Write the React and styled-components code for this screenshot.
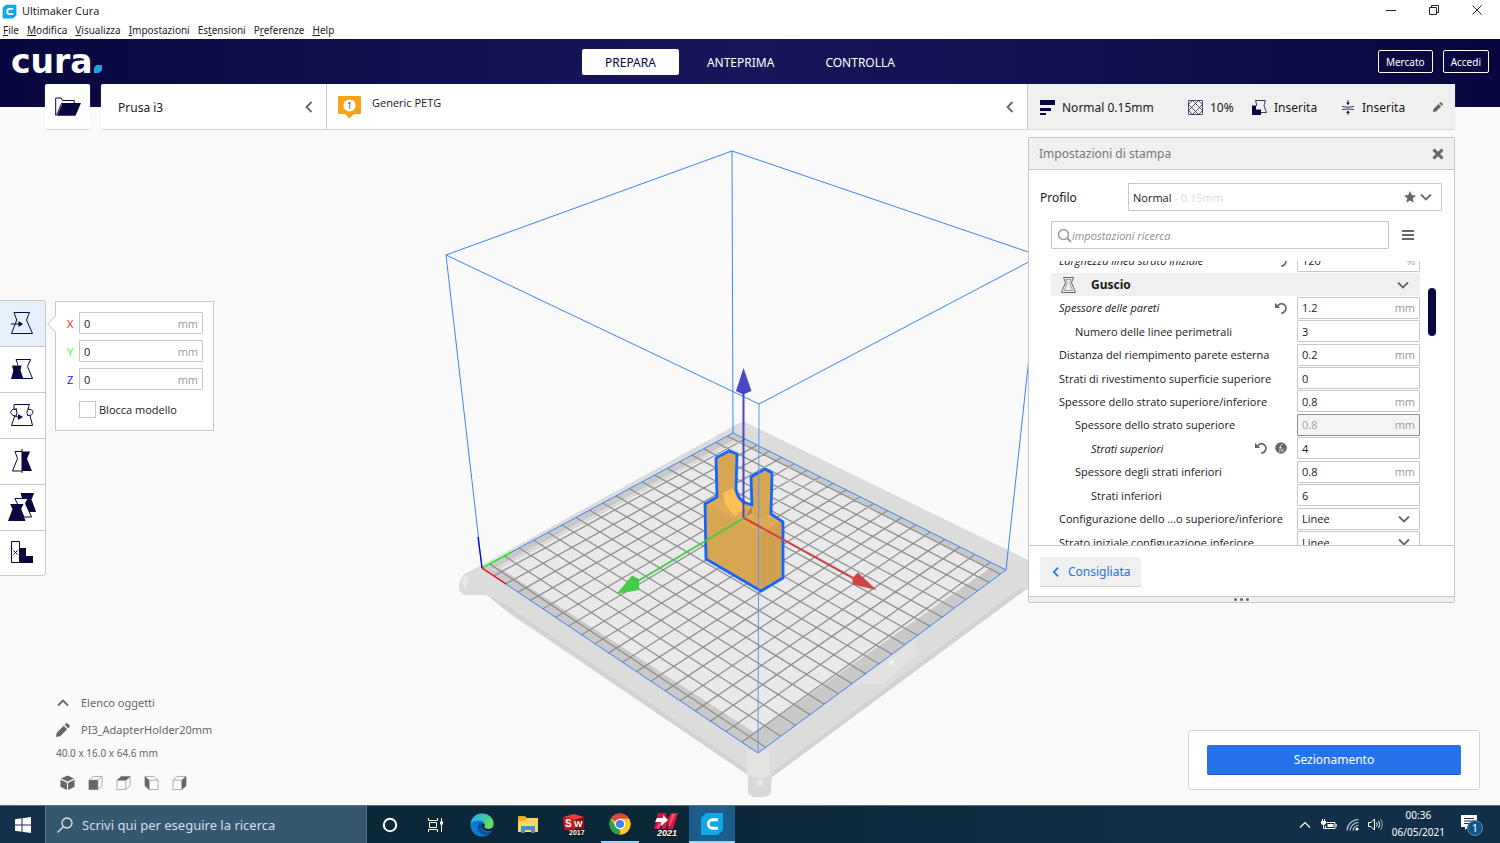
import React, { useState } from "react";
import styled, { createGlobalStyle } from "styled-components";

const navy = "#08073f";
const grey = "#666666";
const line = "#c7c7c7";
const blue = "#2672ea";

const small = `
  font-family: "Open Sans", "Noto Sans", sans-serif;
  font-size: 11px;
`;

const GlobalStyle = createGlobalStyle`
  * {
    box-sizing: border-box;
  }

  body {
    margin: 0;
    font-family: "Noto Sans", "Open Sans", sans-serif;
    font-size: 12px;
    color: #191919;
    background: #fafafa;
  }

  button,
  input,
  select {
    font: inherit;
    color: inherit;
    margin: 0;
    padding: 0;
    border: none;
    background: none;
    outline: none;
  }

  svg {
    display: block;
    flex-shrink: 0;
  }
`;

const Window = styled.div`
  min-height: 100vh;
  display: flex;
  flex-direction: column;
`;

/* window frame */

const TitleBar = styled.div`
  height: 22px;
  padding: 0 2px;
  display: flex;
  align-items: center;
  background: white;
`;

const WindowTitle = styled.span`
  flex: 1;
  padding: 0 0 2px 5px;
  ${small}
  color: #111;
`;

const WindowButton = styled.button`
  width: 43px;
  height: 22px;
  padding-bottom: 2px;
  display: flex;
  align-items: center;
  justify-content: center;
`;

const MenuBar = styled.nav`
  height: 17px;
  padding: 0 0 1px 3px;
  display: flex;
  align-items: center;
  gap: 8px;
  background: white;
  font-size: 10px;
`;

const MenuItem = styled.a`
  color: #222;
  text-decoration: none;
`;

const Header = styled.header`
  height: 45px;
  padding: 0 11px;
  display: grid;
  grid-template-columns: 1fr auto 1fr;
  align-items: center;
  background: linear-gradient(90deg, ${navy}, #18165a 50%, ${navy});
`;

const Brand = styled.div`
  display: flex;
  align-items: baseline;
  gap: 1px;
  font-family: "DejaVu Sans", sans-serif;
  font-weight: bold;
  font-size: 33px;
  line-height: 32px;
  color: white;
`;

const Stages = styled.div`
  display: flex;
  gap: 5px;
`;

const StageTab = styled.button`
  height: 26px;
  padding: 1px 23px 0;
  border-radius: 2px;
  font-size: 12px;
  color: ${(props) => (props.$active ? navy : "white")};
  background: ${(props) => (props.$active ? "white" : "transparent")};
`;

const Account = styled.div`
  display: flex;
  justify-content: flex-end;
  gap: 10px;
`;

const OutlineButton = styled.button`
  height: 23px;
  padding: 1px 7px 0;
  border: 1px solid white;
  border-radius: 2px;
  font-size: 10px;
  color: white;
`;

/* work area */

const Main = styled.main`
  position: relative;
  flex: 1;
  display: flex;
  flex-direction: column;
  background: linear-gradient(90deg, ${navy}, #18165a 50%, ${navy}) top / 100%
    23px no-repeat #fafafa;
`;

const Scene = styled.svg`
  position: absolute;
  top: 0;
  left: 0;
  width: 100%;
  height: 100%;
`;

const TopRow = styled.div`
  position: relative;
  height: 45px;
  margin: 0 45px;
  display: flex;
  gap: 11px;
`;

const Card = styled.div`
  flex: 1;
  display: flex;
  border-radius: 2px;
  background: white;
  box-shadow: 0 1px 1px #d4d4d4;
`;

const OpenButton = styled.button`
  width: 45px;
  display: flex;
  align-items: center;
  justify-content: center;
  border-radius: 2px;
  background: white;
  box-shadow: 0 1px 1px #d4d4d4;
`;

const PrinterButton = styled.button`
  width: 226px;
  padding: 1px 10px 0 17px;
  display: flex;
  align-items: center;
  justify-content: space-between;
  border-right: 1px solid ${line};
`;

const MaterialButton = styled.button`
  flex: 1;
  padding: 1px 10px 0 11px;
  display: flex;
  align-items: center;
  text-align: left;
  gap: 11px;
  border-right: 1px solid ${line};
`;

const MaterialName = styled.span`
  flex: 1;
  padding-bottom: 10px;
  ${small}
`;

const SummaryButton = styled.button`
  width: 427px;
  padding: 1px 12px 0;
  display: grid;
  grid-template-columns: 148px 64px 89px 1fr auto;
  align-items: center;
  background: #f0f0f0;
`;

const SummaryItem = styled.span`
  display: flex;
  align-items: center;
  gap: 7px;
`;

const Body = styled.div`
  position: relative;
  flex: 1;
  padding-top: 8px;
  display: flex;
  justify-content: space-between;
`;

const Side = styled.div`
  display: flex;
  flex-direction: column;
  justify-content: space-between;
  align-items: ${(props) => (props.$right ? "flex-end" : "flex-start")};
`;

const ToolArea = styled.div`
  padding-top: 163px;
  display: flex;
  align-items: flex-start;
  gap: 9px;
`;

const Toolbar = styled.div`
  width: 46px;
  border: 1px solid ${line};
  border-left: none;
  border-radius: 0 4px 4px 0;
  overflow: hidden;
  background: white;
`;

const ToolButton = styled.button`
  width: 100%;
  height: 46px;
  padding-bottom: 2px;
  padding-right: 1px;
  display: flex;
  align-items: center;
  justify-content: center;
  border-bottom: 1px solid ${line};
  background: ${(props) => (props.$active ? "#e5f0fb" : "white")};

  &:last-child {
    height: 44px;
    border-bottom: none;
  }
`;

const MovePanel = styled.div`
  position: relative;
  width: 159px;
  margin-top: 1px;
  padding: 10px 10px 12px 11px;
  border: 1px solid ${line};
  background: white;
  ${small}
`;

const Pointer = styled.svg`
  position: absolute;
  top: 13px;
  left: -9px;
`;

const AxisRow = styled.label`
  height: 22px;
  margin-bottom: 6px;
  display: flex;
  align-items: center;
`;

const AxisName = styled.span`
  width: 12px;
  color: ${(props) => props.$color};
`;

const Field = styled.span`
  flex: 1;
  min-width: 0;
  height: 22px;
  padding: 0 4px;
  display: flex;
  align-items: center;
  border: 1px solid ${line};
  border-radius: 1px;
  background: white;
`;

const FieldInput = styled.input`
  flex: 1;
  min-width: 0;
  width: 0;
`;

const Unit = styled.span`
  color: #9a9a9a;
`;

const LockRow = styled.label`
  margin: 11px 0 0 12px;
  display: flex;
  align-items: center;
  gap: 3px;
`;

const LockBox = styled.input`
  appearance: none;
  width: 17px;
  height: 17px;
  border: 1px solid ${line};
  background: white;
`;

const ObjectInfo = styled.div`
  padding: 0 0 14px 56px;
  display: flex;
  flex-direction: column;
  gap: 11px;
  font-size: 11px;
  line-height: 16px;
  color: ${grey};
`;

const ObjectRow = styled.button`
  display: flex;
  align-items: center;
  gap: 11px;
`;

const ObjectSize = styled.span`
  margin-top: -4px;
  font-size: 10px;
`;

const ViewRow = styled.div`
  padding: 3px 0 0 4px;
  display: flex;
  gap: 13px;
`;

/* print settings */

const Panel = styled.section`
  width: 427px;
  margin-right: 45px;
  border: 1px solid ${line};
  border-radius: 2px;
  background: white;
`;

const PanelHeader = styled.div`
  height: 32px;
  padding: 0 10px;
  display: flex;
  align-items: center;
  justify-content: space-between;
  border-bottom: 1px solid ${line};
  background: #f0f0f0;
  color: #777;
`;

const ProfileRow = styled.label`
  padding: 13px 12px 0 11px;
  display: flex;
  align-items: center;
`;

const ProfileName = styled.span`
  width: 88px;
`;

const ProfileBox = styled.span`
  flex: 1;
  height: 28px;
  padding: 0 8px 0 4px;
  display: flex;
  align-items: center;
  gap: 3px;
  border: 1px solid ${line};
  border-radius: 1px;
  ${small}
`;

const ProfileSelect = styled.select`
  appearance: none;
  field-sizing: content;
`;

const ProfileDetail = styled.span`
  flex: 1;
  color: #dcdcdc;
`;

const SearchRow = styled.div`
  padding: 10px 40px 0 22px;
  display: flex;
  align-items: center;
  gap: 13px;
`;

const SearchBox = styled.label`
  flex: 1;
  height: 28px;
  padding: 0 5px;
  display: flex;
  align-items: center;
  border: 1px solid ${line};
  border-radius: 1px;
`;

const SearchInput = styled.input`
  flex: 1;
  ${small}

  &::placeholder {
    color: #8f8f8f;
    font-style: italic;
    opacity: 1;
  }
`;

const ListArea = styled.div`
  height: 284px;
  margin-top: 12px;
  padding: 0 18px 0 22px;
  display: flex;
  gap: 8px;
  overflow: hidden;
`;

const SettingList = styled.div`
  flex: 1;
  height: 305px;
  margin-top: -12px;
  display: grid;
  grid-auto-rows: 1fr;
  ${small}
`;

const ScrollThumb = styled.div`
  width: 8px;
  height: 48px;
  margin-top: 27px;
  border-radius: 4px;
  background: ${navy};
`;

const Category = styled.button`
  margin-top: 1px;
  padding: 0 10px 0 9px;
  display: flex;
  align-items: center;
  gap: 14px;
  background: #f0f0f0;
  font-family: "Noto Sans", sans-serif;
  font-size: 12px;
  font-weight: bold;
`;

const CategoryName = styled.span`
  flex: 1;
  text-align: left;
`;

const SettingRow = styled.div`
  padding-left: ${(props) => 8 + props.$level * 16}px;
  display: flex;
  align-items: center;
`;

const SettingLabel = styled.label`
  flex: 1;
  white-space: nowrap;
  font-style: ${(props) => (props.$changed ? "italic" : "normal")};
`;

const SettingIcons = styled.span`
  padding-right: 10px;
  display: flex;
  gap: 8px;
`;

const SettingField = styled(Field)`
  flex: 0 0 123px;
  padding-right: ${(props) => (props.$dropdown ? "8px" : "4px")};
  border: 1px solid ${(props) => (props.$off ? "#8f8f8f" : line)};
  background: ${(props) => (props.$off ? "#f4f4f4" : "white")};
  color: ${(props) => (props.$off ? "#a0a0a0" : "inherit")};
`;

const SettingSelect = styled.select`
  flex: 1;
  appearance: none;
`;

const PanelFooter = styled.div`
  padding: 11px 11px 10px;
  border-top: 1px solid ${line};
`;

const RecommendedButton = styled.button`
  height: 29px;
  padding: 0 11px 0 10px;
  display: flex;
  align-items: center;
  gap: 6px;
  border-radius: 2px;
  background: #f0f0f0;
  box-shadow: 0 1px 0 #d0d0d0;
  color: ${blue};
`;

const DragHandle = styled.div`
  height: 6px;
  display: flex;
  align-items: center;
  justify-content: center;
  gap: 3px;
  border-top: 1px solid ${line};
  background: #f0f0f0;
`;

const Dot = styled.span`
  width: 3px;
  height: 3px;
  border-radius: 50%;
  background: ${grey};
`;

const ActionPanel = styled.div`
  width: 292px;
  margin: 0 20px 15px 0;
  padding: 14px 18px;
  border: 1px solid #d4d4d4;
  border-radius: 3px;
  background: white;
`;

const SliceButton = styled.button`
  width: 100%;
  height: 30px;
  border-bottom: 1px solid #1d5fd0;
  border-radius: 2px;
  background: ${blue};
  color: white;
`;

/* taskbar */

const Taskbar = styled.footer`
  height: 38px;
  display: flex;
  border-top: 1px solid #5b7180;
  background: linear-gradient(90deg, #14304b, #0b2838 26%, #0c2838 50%, #122f49 80%);
  color: white;
`;

const TaskButton = styled.button`
  width: ${(props) => props.$width || 46}px;
  display: flex;
  align-items: center;
  justify-content: center;
  background: ${(props) => (props.$active ? "#1b5e8c" : "transparent")};
  border-bottom: ${(props) => (props.$active ? "2px solid #9fd3f5" : "none")};
`;

const RunningButton = styled(TaskButton)`
  width: 38px;
  margin: 0 4px;
  border-bottom: 2px solid #9fd3f5;
`;

const TaskSearch = styled.label`
  width: 322px;
  padding: 0 11px;
  display: flex;
  align-items: center;
  gap: 9px;
  border: 1px solid #567689;
  border-width: 0 1px;
  background: #34596f;
`;

const TaskInput = styled.input`
  flex: 1;
  font-size: 13px;

  &::placeholder {
    color: #d5dee3;
    opacity: 1;
  }
`;

const Tray = styled.div`
  flex: 1;
  padding-right: 16px;
  display: flex;
  align-items: center;
  justify-content: flex-end;
  gap: 9px;
`;

const Clock = styled.div`
  margin-right: 6px;
  text-align: center;
  font-size: 10px;
  line-height: 17px;
  padding-bottom: 2px;
`;

const Chevron = ({ d, size = 14, color = grey, width = 1.8 }) => (
  <svg width={size} height={size} viewBox="0 0 14 14" fill="none" stroke={color} strokeWidth={width}>
    <path d={d} />
  </svg>
);

const LEFT = "M9.5 2 4.5 7l5 5";
const DOWN = "M2 4.5 7 9.5l5-5";
const UP = "M2 9.5 7 4.5l5 5";

const Pencil = ({ size = 12 }) => (
  <svg width={size} height={size} viewBox="0 0 12 12" fill={grey}>
    <path d="M0 12 .6 8.400 6.600 2.400l3 3L3.600 11.400zM7.400 1.600 8.500.5q.7-.7 1.500 0l1.500 1.500q.7.8 0 1.500l-1.100 1.100z" />
  </svg>
);

const Reset = () => (
  <svg width="12" height="12" viewBox="0 0 12 12" fill="none" stroke={grey} strokeWidth="1.700">
    <path d="M2.500 4.200C4.500 1.500 7 1.300 8.800 2.400 11 3.800 11.500 6.500 10.200 8.700 9.300 10.200 8 11 6.300 11.200" />
    <path d="M0 .8V6h5.200z" fill={grey} stroke="none" />
  </svg>
);

const Formula = () => (
  <svg width="12" height="12" viewBox="0 0 12 12">
    <circle cx="6" cy="6" r="5.800" fill={grey} />
    <path
      d="M3.200 10.400c1.500 0 1.500-1.200 1.800-3.400.4-2.900.8-4.800 2.600-4.800M3.800 5.400h3M6 6.600l2.800 3.400M8.800 6.600 6 10"
      fill="none"
      stroke="#e4e4e4"
      strokeWidth=".8"
    />
  </svg>
);

const CuraMark = ({ size }) => (
  <svg width={size} height={size} viewBox="0 0 24 24">
    <path d="M6 1h17v17l-5 5H1V6z" fill="#0fa9e6" />
    <path d="M18 7.800H12.500a4.200 4.200 0 0 0 0 8.400H18" fill="none" stroke="white" strokeWidth="3" />
  </svg>
);

const HOURGLASS = "M4 1.500h15.500l-3 7.500 6 13.500h-21L6.700 9z";

const tools = [
  {
    name: "Sposta",
    art: (
      <>
        <path d={HOURGLASS} />
        <path d="M1 13h9" />
        <path d="M8.500 10v6l4.500-3z" fill={navy} stroke="none" />
      </>
    ),
  },
  {
    name: "Scala",
    art: (
      <>
        <path d="M7.500 8V6.500L6 2.500h14.500l-3 7 5 12H13" />
        <path d="M2 8.500h9.500l-1 5 3 8.500H1l2.300-8.500z" fill={navy} stroke="none" />
      </>
    ),
  },
  {
    name: "Ruota",
    art: (
      <>
        <path d="M4 6V1.500h15.500l-1.500 4M20 12.500l2.500 10h-21L5 12" />
        <path d="M6 6.500C3 5.500.8 7 .8 9.300S4 13.500 9 14.200M18.300 6.500c2.500-.8 4.700.8 4.700 2.800s-2 3.200-5 3.200M6 5l1 5-1 3M18.500 5l-1.700 4.500L18 13" />
        <path d="M8 11v6l5-3z" fill={navy} stroke="none" />
      </>
    ),
  },
  {
    name: "Specchia",
    art: (
      <>
        <path d="M12 2.500H5l2.500 7-5 12.500H12M12 0v24" />
        <path d="M12 2.500h8l-3 7.500L22 22H12z" fill={navy} stroke="none" />
      </>
    ),
  },
  {
    name: "Impostazioni per modello",
    size: 28,
    art: (
      <>
        <path d="M13 .5h12.500L23 6.500 27.500 18.500H20L15.500 8z" fill={navy} stroke={navy} />
        <path d="M7 5.500h13L17.500 10.500l6 13.500H16L9 10z" fill="white" />
        <path d="M2 11h13.500l-2.300 5L17.500 28H0l4.500-12z" fill={navy} stroke="none" />
      </>
    ),
  },
  {
    name: "Blocco supporto",
    art: (
      <>
        <path d="M1.500 1.500h8v21h-8zM3.500 10.500l4 4M7.500 10.500l-4 4" />
        <path d="M9.500 8h6.500v8h7v7H9.500z" fill={navy} stroke="none" />
      </>
    ),
  },
];

const settings = [
  { name: "Larghezza linea strato iniziale", value: "120", unit: "%", changed: true },
  { category: "Guscio" },
  { name: "Spessore delle pareti", value: "1.2", unit: "mm", changed: true },
  { name: "Numero delle linee perimetrali", value: "3", level: 1 },
  { name: "Distanza del riempimento parete esterna", value: "0.2", unit: "mm" },
  { name: "Strati di rivestimento superficie superiore", value: "0" },
  { name: "Spessore dello strato superiore/inferiore", value: "0.8", unit: "mm" },
  { name: "Spessore dello strato superiore", value: "0.8", unit: "mm", level: 1, off: true },
  { name: "Strati superiori", value: "4", level: 2, changed: true, formula: true },
  { name: "Spessore degli strati inferiori", value: "0.8", unit: "mm", level: 1 },
  { name: "Strati inferiori", value: "6", level: 2 },
  { name: "Configurazione dello ...o superiore/inferiore", options: ["Linee", "Concentrica"] },
  { name: "Strato iniziale configurazione inferiore", options: ["Linee", "Concentrica"] },
];

const Setting = ({ item, id }) => (
  <SettingRow $level={item.level || 0}>
    <SettingLabel htmlFor={id} $changed={item.changed}>
      {item.name}
    </SettingLabel>
    {item.changed && (
      <SettingIcons>
        <Reset />
        {item.formula && <Formula />}
      </SettingIcons>
    )}
    <SettingField $off={item.off} $dropdown={Boolean(item.options)}>
      {item.options ? (
        <>
          <SettingSelect id={id}>
            {item.options.map((option) => (
              <option key={option}>{option}</option>
            ))}
          </SettingSelect>
          <Chevron d={DOWN} />
        </>
      ) : (
        <>
          <FieldInput id={id} defaultValue={item.value} disabled={item.off} />
          {item.unit && <Unit>{item.unit}</Unit>}
        </>
      )}
    </SettingField>
  </SettingRow>
);

// projects a point of the bed (0..1 on both sides) to the view
const project = (u, v) => {
  const w = 1 - 0.1512 * u + 0.1484 * v;
  const x = (161.4 * u + 359.8 * v + 482) / w;
  const y = (71.1 * u - 70.7 * v + 568) / w;
  return `${x.toFixed(1)} ${y.toFixed(1)}`;
};

const gridPath = () => {
  let d = "";
  for (let i = 1; i < 20; i++) {
    d += `M${project(i / 20, 0)}L${project(i / 20, 1)}`;
  }
  for (let j = -9; j <= 9; j++) {
    const v = 0.5 + j / 19;
    d += `M${project(0, v)}L${project(1, v)}`;
  }
  return d;
};

const MODEL =
  "M716 458 729 451 737 454 736 489Q738 500 746 503L752 505 751 477 765 469 772 473 771 514 783 522V578L761 591 706 559 705 504 717 497z";

const BuildPlate = () => (
  <Scene viewBox="0 84 1500 721" fill="none" aria-hidden="true">
    <path d="M459 583 464 574 482 565 743 421 1028 560 1060 572V590H1025L772 777 770 795 765 797H753L748 793V775L507 612 487 595H463L459 590z" fill="#dcdcdc" />
    <path d="M487 595 507 610 748 775V770L508 606zM772 777 1025 590 1020 588 772 772z" fill="#d2d2d2" />
    <path d="M747 750H770V775L760 779 747 774z" fill="#e3e3e3" />
    <path d="M748 776 760 780 771 776V793L766 797H753L748 793z" fill="#d8d8d8" />
    <path d="M757 780h6v6h-6z" fill="#e6e6e6" />
    <path d="M852 684 916 640V654L883 684z" fill="#e2e2e2" />
    <path d="M889 659h5v6h-5z" fill="#f0f0f0" />
    <path d="M466 574c-5 5-5 9-1 15l4-7z" fill="#e8e8e8" />
    <path d="M482 568 733 433 1006 570 758 753z" fill="#c9c9c9" />
    <path d="M500 568 736 441 990 568 755 733z" fill="#e9e9e9" />
    <path d="M493 570 735 440" stroke="#efefef" />
    <path d={gridPath()} stroke="#8f9092" strokeWidth="1.300" />
    <g stroke="#3b84f5">
      <path d="M482 568 733 433 1006 570 758 753z" />
      <path d="M446 255 732 151 1040 256 759 404zM446 255 482 568M732 151 733 433M1040 256 1006 570" />
    </g>
    <path d="M482 568 512 552" stroke="#0f0" strokeWidth="1.300" />
    <path d="M482 568 506 584" stroke="red" strokeWidth="1.300" />
    <path d="M478 537 482 568" stroke="#0000e0" strokeWidth="1.300" />
    <path d={MODEL} fill="#d6a653" />
    <path d="M761 531 783 521V578L761 591z" fill="#d0a04f" />
    <path d="M705 504 717 497 748 514 771 514 783 521 761 532z" fill="#dfaa55" />
    <path d="M716 458 729 451 737 454 736 489 733 490 723 493 716 498zM754 478 765 469 772 473V514L754 520z" fill="#d6a653" />
    <path d="M723 493 733 488Q736 501 746 507L735 516Q724 507 723 493z" fill="#fcc258" />
    <path d="M745 517 752 506V513z" fill="#a98851" />
    <path d={MODEL} stroke="#1765ff" strokeWidth="2.800" strokeLinejoin="round" />
    <path d="M759 404 758 753" stroke="#5b96ee" />
    <path d="M743.500 518V390" stroke="#4b46c6" strokeWidth="2" />
    <path d="M743.500 368 751.500 391 743 394.500 736 391z" fill="#4b46c6" />
    <path d="M744 518 638 581" stroke="#44cc44" strokeWidth="2" />
    <path d="M616.500 594 632 575.500 639 579V590z" fill="#44cc44" />
    <path d="M744 518 853 578" stroke="#cc4444" strokeWidth="2" />
    <path d="M876.500 590 858 572.500 852.500 578V584.500z" fill="#cc4444" />
  </Scene>
);

const cubeFaces = [
  { name: "Vista 3D", path: "M8 0 15 3.300 8 6.500 1 3.300zM.5 4.500 7.400 7.600V15.500L.5 12zM8.600 7.600 15.500 4.500V12L8.600 15.500z", solid: true },
  { name: "Vista frontale", path: "M1 5h9.500v10H1z" },
  { name: "Vista superiore", path: "M1 5 5.500 1H15.500L10.500 5z" },
  { name: "Vista sinistra", path: "M15 1 10.500 5V15L15 11z", flip: true },
  { name: "Vista destra", path: "M15 1 10.500 5V15L15 11z" },
];

const CubeIcon = ({ face }) => (
  <svg width="15" height="16" viewBox="0 0 16 16">
    <g transform={face.flip ? "matrix(-1 0 0 1 16 0)" : undefined}>
      {!face.solid && (
        <path d="M1 5 5.500 1H15V11L10.500 15H1zM1 5h9.500v10M10.500 5 15 1" fill="none" stroke="#a8a8a8" />
      )}
      <path d={face.path} fill={grey} />
    </g>
  </svg>
);

const axes = [
  { name: "X", color: "#ff2222" },
  { name: "Y", color: "#33ff33" },
  { name: "Z", color: "#2222ff" },
];

const menus = [
  ["", "F", "ile"],
  ["", "M", "odifica"],
  ["", "V", "isualizza"],
  ["", "I", "mpostazioni"],
  ["Es", "t", "ensioni"],
  ["P", "r", "eferenze"],
  ["", "H", "elp"],
];

const App = () => {
  const [stage, setStage] = useState("PREPARA");
  const [tool, setTool] = useState("Sposta");

  return (
    <Window>
      <GlobalStyle />
      <TitleBar>
        <CuraMark size={15} />
        <WindowTitle>Ultimaker Cura</WindowTitle>
        <WindowButton aria-label="Riduci a icona">
          <svg width="10" height="10" stroke="#222">
            <path d="M0 5.500h10" />
          </svg>
        </WindowButton>
        <WindowButton aria-label="Ripristina">
          <svg width="10" height="10" fill="none" stroke="#222">
            <path d="M.5 2.500h7v7h-7zM2.500 2.500v-2h7v7h-2" />
          </svg>
        </WindowButton>
        <WindowButton aria-label="Chiudi">
          <svg width="10" height="10" stroke="#222">
            <path d="M.5.500l9 9M9.500.500l-9 9" />
          </svg>
        </WindowButton>
      </TitleBar>
      <MenuBar>
        {menus.map(([before, key, after]) => (
          <MenuItem href="#" key={before + key}>
            {before}
            <u>{key}</u>
            {after}
          </MenuItem>
        ))}
      </MenuBar>
      <Header>
        <Brand>
          cura
          <svg width="8" height="8">
            <path d="M2.500 0H8v5L5 8H0V2.500z" fill="#1fa3dc" />
          </svg>
        </Brand>
        <Stages>
          {["PREPARA", "ANTEPRIMA", "CONTROLLA"].map((name) => (
            <StageTab key={name} $active={stage === name} onClick={() => setStage(name)}>
              {name}
            </StageTab>
          ))}
        </Stages>
        <Account>
          <OutlineButton>Mercato</OutlineButton>
          <OutlineButton>Accedi</OutlineButton>
        </Account>
      </Header>

      <Main>
        <BuildPlate />
        <TopRow>
          <OpenButton aria-label="Apri file">
            <svg width="26" height="20" viewBox="0 0 26 20">
              <path d="M.7 18.500V1h5.500l1.500 2.500h11.500v3H6.500L1.500 18.500" fill="none" stroke={navy} />
              <path d="M7.500 6H26l-5.500 12.800H2.200z" fill={navy} />
            </svg>
          </OpenButton>
          <Card>
            <PrinterButton>
              Prusa i3
              <Chevron d={LEFT} />
            </PrinterButton>
            <MaterialButton>
              <svg width="23" height="23" viewBox="0 0 23 23">
                <path d="M1 0h21q1 0 1 1v16q0 1-1 1h-6l-4.500 4.500L7 18H1q-1 0-1-1V1q0-1 1-1z" fill="#f5a316" />
                <circle cx="11.500" cy="9.500" r="6" fill="white" />
                <text x="11.500" y="12.500" textAnchor="middle" fontSize="8" fill="#333">
                  1
                </text>
              </svg>
              <MaterialName>Generic PETG</MaterialName>
              <Chevron d={LEFT} />
            </MaterialButton>
            <SummaryButton>
              <SummaryItem>
                <svg width="15" height="15" fill={navy}>
                  <path d="M0 0h15v5H0zM0 8h11v3H0zM0 13h6v2H0z" />
                </svg>
                Normal 0.15mm
              </SummaryItem>
              <SummaryItem>
                <svg width="15" height="15" viewBox="0 0 15 15" fill="none" stroke={navy} strokeWidth=".7">
                  <path d="M.5.500h14v14H.5zM.5 4.500l4-4M.5 10.500l10-10M4.500 14.500l10-10M10.500 14.500l4-4M10.500.500l4 4M4.500.500l10 10M.5 4.500l10 10M.5 10.500l4 4" />
                </svg>
                10%
              </SummaryItem>
              <SummaryItem>
                <svg width="15" height="15" viewBox="0 0 15 15">
                  <path d="M0 5.500h4v4h5V15H0z" fill={navy} />
                  <path d="M4.500 6V4L3.500.500h10l-1.500 5 2.500 7H9" fill="none" stroke={navy} strokeWidth=".8" />
                </svg>
                Inserita
              </SummaryItem>
              <SummaryItem>
                <svg width="14" height="15" viewBox="0 0 14 15" fill="none" stroke={navy}>
                  <path d="M1 6.500q6 1.500 12 0M1 9.500q6-1 12 0" strokeWidth=".8" />
                  <path d="M7 0v3M7 12v3" strokeWidth=".8" />
                  <path d="M5.200 2.500h3.600L7 5.200zM5.200 13h3.600L7 10.300z" fill={navy} stroke="none" />
                </svg>
                Inserita
              </SummaryItem>
              <Pencil size={10} />
            </SummaryButton>
          </Card>
        </TopRow>

        <Body>
          <Side>
            <ToolArea>
              <Toolbar>
                {tools.map((item) => (
                  <ToolButton
                    key={item.name}
                    aria-label={item.name}
                    $active={tool === item.name}
                    onClick={() => setTool(item.name)}
                  >
                    <svg
                      width={item.size || 24}
                      height={item.size || 24}
                      viewBox={`0 0 ${item.size || 24} ${item.size || 24}`}
                      fill="none"
                      stroke={navy}
                    >
                      {item.art}
                    </svg>
                  </ToolButton>
                ))}
              </Toolbar>
              <MovePanel>
                <Pointer width="9" height="18">
                  <path d="M9 .5 .7 9 9 17.500" fill="white" stroke={line} />
                </Pointer>
                {axes.map((axis) => (
                  <AxisRow key={axis.name}>
                    <AxisName $color={axis.color}>{axis.name}</AxisName>
                    <Field>
                      <FieldInput defaultValue="0" />
                      <Unit>mm</Unit>
                    </Field>
                  </AxisRow>
                ))}
                <LockRow>
                  <LockBox type="checkbox" />
                  Blocca modello
                </LockRow>
              </MovePanel>
            </ToolArea>
            <ObjectInfo>
              <ObjectRow>
                <Chevron d={UP} />
                Elenco oggetti
              </ObjectRow>
              <ObjectRow>
                <Pencil size={14} />
                PI3_AdapterHolder20mm
              </ObjectRow>
              <ObjectSize>40.0 x 16.0 x 64.6 mm</ObjectSize>
              <ViewRow>
                {cubeFaces.map((face) => (
                  <button key={face.name} aria-label={face.name}>
                    <CubeIcon face={face} />
                  </button>
                ))}
              </ViewRow>
            </ObjectInfo>
          </Side>

          <Side $right>
            <Panel>
              <PanelHeader>
                Impostazioni di stampa
                <button aria-label="Chiudi impostazioni">
                  <svg width="12" height="12" stroke={grey} strokeWidth="3">
                    <path d="M1.500 1.500l9 9M10.500 1.500l-9 9" />
                  </svg>
                </button>
              </PanelHeader>
              <ProfileRow>
                <ProfileName>Profilo</ProfileName>
                <ProfileBox>
                  <ProfileSelect>
                    <option>Normal</option>
                  </ProfileSelect>
                  <ProfileDetail>- 0.15mm</ProfileDetail>
                  <svg width="12" height="12" viewBox="0 0 12 12" fill={grey}>
                    <path d="M6 0 7.700 4.100 12 4.500 8.700 7.400 9.700 11.800 6 9.400 2.300 11.800 3.300 7.400 0 4.500 4.300 4.100z" />
                  </svg>
                  <Chevron d={DOWN} />
                </ProfileBox>
              </ProfileRow>
              <SearchRow>
                <SearchBox>
                  <svg width="15" height="15" fill="none" stroke="#9a9a9a" strokeWidth="1.500">
                    <circle cx="6.500" cy="6.500" r="5" />
                    <path d="M10 10l4 4" strokeWidth="2" />
                  </svg>
                  <SearchInput placeholder="impostazioni ricerca" aria-label="impostazioni ricerca" />
                </SearchBox>
                <button aria-label="Visibilità impostazioni">
                  <svg width="12" height="12" fill={grey}>
                    <path d="M0 1h12v2H0zM0 5h12v2H0zM0 9h12v2H0z" />
                  </svg>
                </button>
              </SearchRow>
              <ListArea>
                <SettingList>
                  {settings.map((item, i) =>
                    item.category ? (
                      <Category key={item.category}>
                        <svg width="17" height="16" viewBox="0 0 17 16" fill="none" stroke={grey}>
                          <path d="M3.500.500h10l-2 5 4 10h-14l4-10z" />
                          <path d="M6 2.500h5l-1.200 3.500 2.700 7.500H4.500L7.200 6z" strokeWidth=".6" />
                        </svg>
                        <CategoryName>{item.category}</CategoryName>
                        <Chevron d={DOWN} />
                      </Category>
                    ) : (
                      <Setting key={item.name} item={item} id={`setting-${i}`} />
                    )
                  )}
                </SettingList>
                <ScrollThumb />
              </ListArea>
              <PanelFooter>
                <RecommendedButton>
                  <Chevron d={LEFT} size={12} color={blue} width={2} />
                  Consigliata
                </RecommendedButton>
              </PanelFooter>
              <DragHandle>
                <Dot />
                <Dot />
                <Dot />
              </DragHandle>
            </Panel>
            <ActionPanel>
              <SliceButton>Sezionamento</SliceButton>
            </ActionPanel>
          </Side>
        </Body>
      </Main>

      <Taskbar>
        <TaskButton $width={45} aria-label="Start">
          <svg width="16" height="16" fill="white">
            <path d="M0 2.200 6.500 1.300V7.500H0zM7.500 1.200 16 0V7.500H7.500zM0 8.500H6.500V14.700L0 13.800zM7.500 8.500H16V16L7.500 14.800z" />
          </svg>
        </TaskButton>
        <TaskSearch>
          <svg width="16" height="16" fill="none" stroke="#dfe7eb" strokeWidth="1.300">
            <circle cx="10" cy="6" r="5" />
            <path d="M6.500 9.500.5 15.500" />
          </svg>
          <TaskInput placeholder="Scrivi qui per eseguire la ricerca" aria-label="Ricerca" />
        </TaskSearch>
        <TaskButton aria-label="Cortana">
          <svg width="16" height="16" fill="none" stroke="white" strokeWidth="2">
            <circle cx="8" cy="8" r="6.200" />
          </svg>
        </TaskButton>
        <TaskButton aria-label="Visualizzazione attività">
          <svg width="16" height="16" fill="none" stroke="white">
            <path d="M.5 1v2.500h9V1M1.500 5.500h7v5h-7zM.5 15v-2.500h9V15M13.500 1v14" />
            <path d="M12 4.500h3v3h-3z" fill="white" stroke="none" />
          </svg>
        </TaskButton>
        <TaskButton aria-label="Edge">
          <svg width="24" height="24" viewBox="0 0 24 24">
            <defs>
              <linearGradient id="edgeTop" x1="0" y1="0" x2="1" y2=".4">
                <stop offset="0" stopColor="#2aa5e8" />
                <stop offset=".55" stopColor="#33c6c4" />
                <stop offset="1" stopColor="#6be04e" />
              </linearGradient>
            </defs>
            <circle cx="12" cy="12" r="11.500" fill="#1278d4" />
            <path d="M.6 11C1.500 4.500 6.500.5 12 .5c6.500 0 11.500 4.800 11.500 10 0 3.500-2.600 5.500-5.700 5.500-2.500 0-4-1-3.300-2.200C16 10.500 13 7.500 9.500 7.500 5 7.500 1.500 9 .6 11z" fill="url(#edgeTop)" />
            <path d="M9 10.500c-3 4 0 10.500 5.500 11.500 3.200.5 6.200-1.200 7.800-4-6 3-12-.5-11.300-5 .1-1.300.7-2 1.500-2.500-1-.8-2.500-.8-3.500 0z" fill="#0c4c9c" />
            <path d="M12.500 10.500c-1.800 1.700-1.500 4.500 1.500 6.500 3 1.700 6 1.300 8.700.2l1-2.700-3.200 1.200c-3 .6-7-.2-6-1.900.7-1.300.2-3-2-3.300z" fill="#0b2838" />
          </svg>
        </TaskButton>
        <TaskButton aria-label="Esplora file">
          <svg width="22" height="18" viewBox="0 0 22 18">
            <path d="M1 0h7l2 2H1z" fill="#e8a31c" />
            <path d="M1 2h20v14H1z" fill="#fcd462" />
            <path d="M1 2h9l-2 3H1z" fill="#eeb02a" />
            <path d="M4 17V11q0-1 1-1h12q1 0 1 1v6h-4v-3H8v3z" fill="#3d94d6" />
          </svg>
        </TaskButton>
        <TaskButton aria-label="SolidWorks">
          <svg width="24" height="24" viewBox="0 0 24 24" fontFamily="Liberation Sans" fontWeight="bold">
            <path d="M1 4 12 1 22 4 13 7z" fill="#ee3b3b" />
            <path d="M1 4 13 7V20L2 16z" fill="#c31a20" />
            <path d="M22 4 13 7V20L22 16z" fill="#8e1015" />
            <text x="3" y="14" fontSize="10" fill="white">S</text>
            <text x="12" y="14" fontSize="9" fill="white">W</text>
            <text x="7" y="22" fontSize="7" fill="white" stroke="#111" strokeWidth="1.500" paintOrder="stroke">2017</text>
          </svg>
        </TaskButton>
        <RunningButton aria-label="Chrome">
          <svg width="22" height="22" viewBox="0 0 22 22">
            <circle cx="11" cy="11" r="10.500" fill="#fbc928" />
            <path d="M11 11 1.900 5.700A10.500 10.500 0 0 1 20.100 5.700H11z" fill="#e04537" />
            <path d="M1.900 5.700 6.500 13.600 11 16 11 21.500A10.500 10.500 0 0 1 1.900 5.700z" fill="#2aa152" />
            <path d="M15.500 13.600 11 21.500A10.500 10.500 0 0 0 20.100 5.700H11z" fill="#fbc928" />
            <circle cx="11" cy="11" r="5.200" fill="white" />
            <circle cx="11" cy="11" r="4.100" fill="#4284f3" />
          </svg>
        </RunningButton>
        <TaskButton aria-label="Mastercam">
          <svg width="24" height="24" viewBox="0 0 24 24">
            <path d="M4 0h8l1 6 4-6h7l-5 16h-5l2-8-5 8h-3L8 8 6 16H0z" fill="#d8123c" />
            <path d="M3 5h6V2l5 5-7 6V9H1z" fill="white" />
            <path d="M2 15 5 15 8 10 5 10zM18 1 14 13 16 13 22 1z" fill="#f06c8c" opacity=".7" />
            <text x="3" y="23" fontFamily="Liberation Sans" fontSize="9" fontWeight="bold" fontStyle="italic" fill="white" stroke="#111" strokeWidth="1.500" paintOrder="stroke">
              2021
            </text>
          </svg>
        </TaskButton>
        <TaskButton $active aria-label="Ultimaker Cura">
          <CuraMark size={24} />
        </TaskButton>
        <Tray>
          <Chevron d={UP} size={14} color="white" width={1.200} />
          <svg width="16" height="12" viewBox="0 0 16 12" fill="none" stroke="white">
            <path d="M5.500 3.500h8.500v6H4.500V7" />
            <path d="M6.500 5h6v3h-6zM0 2h5v2q0 2-2.500 2T0 4z" fill="white" stroke="none" />
            <path d="M1.500 0v2M3.500 0v2M2.500 6v3.500H5M15.200 5v3" />
          </svg>
          <svg width="13" height="13" viewBox="0 0 13 13" fill="none" stroke="white" strokeWidth="1.100">
            <path d="M1 12.500A11.500 11.500 0 0 1 12.500 1.500M4 12.500a8.500 8.500 0 0 1 8.500-8M7 12.500a5.500 5.500 0 0 1 5.500-5" opacity=".8" />
            <circle cx="11" cy="11" r="1.600" fill="white" stroke="none" />
          </svg>
          <svg width="15" height="13" viewBox="0 0 15 13" fill="none" stroke="white">
            <path d="M.5 4.500h2.500l3.500-3.500v11L3 8.500H.5zM8.500 4.500q1.500 2 0 4M10.500 3q2.500 3.500 0 7" />
            <path d="M12.500 1q3.500 5.500 0 11" opacity=".6" />
          </svg>
          <Clock>
            00:36
            <br />
            06/05/2021
          </Clock>
          <svg width="24" height="22" viewBox="0 0 24 22">
            <path d="M1 1h16v12H8l-3 3v-3H1z" fill="white" />
            <path d="M4 4.500h10M4 7h10M4 9.500h7" stroke="#122f49" />
            <circle cx="15" cy="14" r="7.500" fill="#12558a" stroke="#5c8fb5" />
            <text x="15" y="18" textAnchor="middle" fontSize="11" fill="white">1</text>
          </svg>
        </Tray>
      </Taskbar>
    </Window>
  );
};

export default App;
